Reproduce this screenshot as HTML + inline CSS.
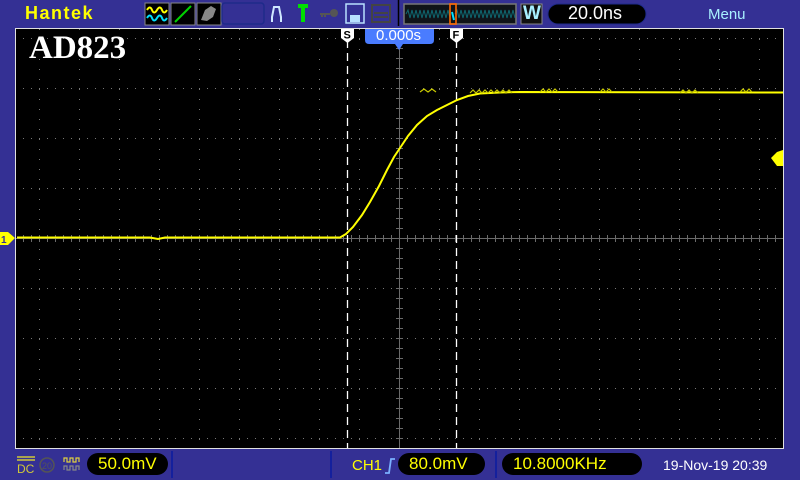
<!DOCTYPE html>
<html><head><meta charset="utf-8"><style>
html,body{margin:0;padding:0;width:800px;height:480px;overflow:hidden;background:#343094;font-family:"Liberation Sans",sans-serif;}
.t{position:absolute;white-space:nowrap}
</style></head><body>
<svg width="800" height="480" style="position:absolute;left:0;top:0" xmlns="http://www.w3.org/2000/svg">
<defs>
<pattern id="dc" x="39" y="29" width="40" height="10" patternUnits="userSpaceOnUse"><rect x="0" y="0" width="1" height="1" fill="#777"/></pattern>
<pattern id="dr" x="0" y="38" width="8" height="50" patternUnits="userSpaceOnUse"><rect x="7" y="0" width="1" height="1" fill="#777"/></pattern>
</defs>
<rect x="0" y="0" width="800" height="480" fill="#343094"/>
<rect x="15" y="28" width="769" height="421" fill="#e0e0e0"/>
<rect x="16" y="29" width="767" height="419" fill="#000"/>
<rect x="16" y="29" width="767" height="419" fill="url(#dc)"/>
<rect x="16" y="29" width="767" height="419" fill="url(#dr)"/>
<line x1="16" y1="238.5" x2="783" y2="238.5" stroke="#6a6a6a" stroke-width="1"/>
<line x1="399.5" y1="29" x2="399.5" y2="448" stroke="#6a6a6a" stroke-width="1"/>
<g stroke="#6a6a6a" stroke-width="1">
<path d="M23.5 235v7M31.5 235v7M39.5 235v7M47.5 235v7M55.5 235v7M63.5 235v7M71.5 235v7M79.5 235v7M87.5 235v7M95.5 235v7M103.5 235v7M111.5 235v7M119.5 235v7M127.5 235v7M135.5 235v7M143.5 235v7M151.5 235v7M159.5 235v7M167.5 235v7M175.5 235v7M183.5 235v7M191.5 235v7M199.5 235v7M207.5 235v7M215.5 235v7M223.5 235v7M231.5 235v7M239.5 235v7M247.5 235v7M255.5 235v7M263.5 235v7M271.5 235v7M279.5 235v7M287.5 235v7M295.5 235v7M303.5 235v7M311.5 235v7M319.5 235v7M327.5 235v7M335.5 235v7M343.5 235v7M351.5 235v7M359.5 235v7M367.5 235v7M375.5 235v7M383.5 235v7M391.5 235v7M407.5 235v7M415.5 235v7M423.5 235v7M431.5 235v7M439.5 235v7M447.5 235v7M455.5 235v7M463.5 235v7M471.5 235v7M479.5 235v7M487.5 235v7M495.5 235v7M503.5 235v7M511.5 235v7M519.5 235v7M527.5 235v7M535.5 235v7M543.5 235v7M551.5 235v7M559.5 235v7M567.5 235v7M575.5 235v7M583.5 235v7M591.5 235v7M599.5 235v7M607.5 235v7M615.5 235v7M623.5 235v7M631.5 235v7M639.5 235v7M647.5 235v7M655.5 235v7M663.5 235v7M671.5 235v7M679.5 235v7M687.5 235v7M695.5 235v7M703.5 235v7M711.5 235v7M719.5 235v7M727.5 235v7M735.5 235v7M743.5 235v7M751.5 235v7M759.5 235v7M767.5 235v7M775.5 235v7"/>
<path d="M396 38.5h7M396 48.5h7M396 58.5h7M396 68.5h7M396 78.5h7M396 98.5h7M396 108.5h7M396 118.5h7M396 128.5h7M396 148.5h7M396 158.5h7M396 168.5h7M396 178.5h7M396 198.5h7M396 208.5h7M396 218.5h7M396 228.5h7M396 248.5h7M396 258.5h7M396 268.5h7M396 278.5h7M396 298.5h7M396 308.5h7M396 318.5h7M396 328.5h7M396 348.5h7M396 358.5h7M396 368.5h7M396 378.5h7M396 398.5h7M396 408.5h7M396 418.5h7M396 428.5h7M396 88.5h7M396 138.5h7M396 188.5h7M396 288.5h7M396 338.5h7M396 388.5h7M396 438.5h7"/>
</g>
<line x1="347.5" y1="40" x2="347.5" y2="448" stroke="#fff" stroke-width="1.3" stroke-dasharray="8,5"/>
<line x1="456.5" y1="40" x2="456.5" y2="448" stroke="#fff" stroke-width="1.3" stroke-dasharray="8,5"/>
<path d="M17 237.5 L150 237.5 L158 239 L165 237.5 L340 237.5 L346 234 L353 227 L362 215 L370 202 L379 186 L387 170 L394 157 L400 148 L408 136 L417 125 L427 116 L437 110 L447 105 L457 100 L468 96 L480 93.5 L500 92.5 L520 92 L783 92.5" fill="none" stroke="#ffff00" stroke-width="2"/>
<path d="M420 92 l4 -3 l4 3 l4 -3 l4 3 M470 93 l3 -3 l3 3 l3 -3 l3 3 l3 -3 l3 3 l3 -3 l3 3 l3 -3 l3 3 l3 -3 l3 3 l3 -3 l3 3 M540 92 l3 -3 l3 3 l3 -3 l3 3 l3 -3 l3 3 M600 92 l3 -3 l3 3 l3 -3 l3 3 M680 93 l3 -3 l3 3 l3 -3 l3 3 l3 -3 l3 3 M740 92 l3 -3 l3 3 l3 -3 l3 3" fill="none" stroke="#c8c800" stroke-width="1.2"/>
<path d="M0 232 H8 L15 238 L8 245 H0 Z" fill="#ffff00"/>
<text x="1" y="243" font-family="Liberation Sans" font-weight="bold" font-size="10" fill="#343094">1</text>
<path d="M783 150 V166 H777 L771 158 L777 152 Z" fill="#ffff00"/>
<path d="M341 29 h13 v9 l-6.5 5 l-6.5 -5 z" fill="#fff"/>
<text x="343.5" y="38.5" font-family="Liberation Sans" font-weight="bold" font-size="11" fill="#000">S</text>
<path d="M450 29 h13 v9 l-6.5 5 l-6.5 -5 z" fill="#fff"/>
<text x="452.5" y="38.5" font-family="Liberation Sans" font-weight="bold" font-size="11" fill="#000">F</text>
<path d="M365 29 H434 V40 Q434 44 430 44 H403 L399 50 L395 44 H369 Q365 44 365 40 Z" fill="#4a7cff"/>
<rect x="145" y="3" width="24" height="22" fill="#000" stroke="#888" stroke-width="1"/>
<path d="M147 10 q3 -5 5 0 t5 0 t5 0 t5 0" stroke="#ffff00" stroke-width="2" fill="none"/>
<path d="M147 18 q3 -5 5 0 t5 0 t5 0 t5 0" stroke="#00e0ff" stroke-width="2" fill="none"/>
<rect x="171" y="3" width="24" height="22" fill="#000" stroke="#888"/>
<line x1="175" y1="22" x2="191" y2="6" stroke="#00d000" stroke-width="2"/>
<rect x="197" y="3" width="24" height="22" fill="#000" stroke="#888"/>
<path d="M201 20 l4 -10 l6 -4 l5 3 l-3 8 l-6 4 z" fill="#888"/>
<rect x="222" y="3" width="42" height="21" rx="3" fill="#343094" stroke="#1e2a8a" stroke-width="1.5"/>
<path d="M272 22 v-5 l2 -10 h5 l2 10 v5" stroke="#d0e8ff" stroke-width="2" fill="none"/>
<path d="M298 6 h10 M303 6 v16" stroke="#00e000" stroke-width="4"/>
<path d="M320 14 h10 M322 14 v3 M325 14 v3" stroke="#555" stroke-width="2"/>
<circle cx="334" cy="13" r="4" fill="#555"/>
<rect x="346" y="4" width="18" height="19" fill="none" stroke="#b8e0ff" stroke-width="1.5"/>
<rect x="350" y="15" width="10" height="7" fill="#b8e0ff"/>
<rect x="372" y="5" width="18" height="17" fill="none" stroke="#444" stroke-width="2"/>
<path d="M374 13 h14 M374 17 h14" stroke="#444" stroke-width="2"/>
<line x1="398.5" y1="0" x2="398.5" y2="26" stroke="#000" stroke-width="1.5"/>
<rect x="404" y="4" width="112" height="20" fill="#101418" stroke="#777" stroke-width="1.5"/>
<path d="M406 14 l2 -4 l2 8 l2 -8 l2 8 l2 -8 l2 8 l2 -8 l2 8 l2 -8 l2 8 l2 -8 l2 8 l2 -8 l2 8 l2 -8 l2 8 l2 -8 l2 8 l2 -8 l2 8 l2 -8 l2 8 M455 14 l2 -4 l2 8 l2 -8 l2 8 l2 -8 l2 8 l2 -8 l2 8 l2 -8 l2 8 l2 -8 l2 8 l2 -8 l2 8 l2 -8 l2 8 l2 -8 l2 8 l2 -8 l2 8 l2 -8 l2 8 l2 -8 l2 8 l2 -8 l2 8 l2 -8 l2 8 l2 -8 l2 8" stroke="#0f6870" stroke-width="1" fill="none"/>
<rect x="450" y="4" width="6" height="20" fill="none" stroke="#ff6a00" stroke-width="1.6"/>
<path d="M452 12 l2 8" stroke="#00e0ff" stroke-width="2"/>
<rect x="521" y="4" width="21" height="20" fill="#111" stroke="#888"/>
<rect x="548" y="4" width="98" height="20" rx="10" fill="#000" stroke="#1e2a8a"/>
<path d="M17 457 h18 M17 460 h18" stroke="#d0c838" stroke-width="1.5"/>
<circle cx="47" cy="465" r="7" fill="none" stroke="#555" stroke-width="1.5"/>
<text x="42" y="469" font-size="9" fill="#555" font-family="Liberation Sans">20</text>
<path d="M64 462 v-4 h3 v4 h3 v-4 h3 v4 h3 v-4 h3 v4" stroke="#e0d040" stroke-width="1.2" fill="none"/>
<path d="M64 470 v-4 h3 v4 h3 v-4 h3 v4 h3 v-4 h3 v4" stroke="#888" stroke-width="1.2" fill="none"/>
<rect x="87" y="453" width="81" height="22" rx="11" fill="#000"/>
<line x1="172" y1="451" x2="172" y2="478" stroke="#0a1aa0" stroke-width="1.5"/>
<line x1="331" y1="451" x2="331" y2="478" stroke="#0a1aa0" stroke-width="1.5"/>
<line x1="496" y1="451" x2="496" y2="478" stroke="#0a1aa0" stroke-width="1.5"/>
<path d="M385 473 h4 l2 -14 h4" stroke="#7ab0ff" stroke-width="1.8" fill="none"/>
<rect x="398" y="453" width="87" height="22" rx="11" fill="#000"/>
<rect x="502" y="453" width="140" height="22" rx="11" fill="#000"/>
</svg>
<div class="t" style="left:25px;top:3px;font-size:18px;font-weight:bold;color:#ffff00;letter-spacing:1.5px;">Hantek</div>
<div class="t" style="left:523px;top:3px;font-size:19px;font-weight:bold;color:#a8f0ff">W</div>
<div class="t" style="left:568px;top:3px;font-size:18px;color:#fff">20.0ns</div>
<div class="t" style="left:708px;top:6px;font-size:15px;color:#a8f0ff">Menu</div>
<div class="t" style="left:29px;top:30px;font-family:'Liberation Serif',serif;font-weight:bold;font-size:33px;color:#fff">AD823</div>
<div class="t" style="left:376px;top:27px;font-size:15px;color:#fff">0.000s</div>
<div class="t" style="left:17px;top:462px;font-size:12px;color:#d0c838">DC</div>
<div class="t" style="left:98px;top:454px;font-size:17px;color:#ffff00">50.0mV</div>
<div class="t" style="left:352px;top:457px;font-size:15px;color:#ffff00">CH1</div>
<div class="t" style="left:409px;top:454px;font-size:17px;color:#ffff00">80.0mV</div>
<div class="t" style="left:513px;top:454px;font-size:17px;color:#ffff00">10.8000KHz</div>
<div class="t" style="left:663px;top:457px;font-size:14px;color:#fff">19-Nov-19 20:39</div>
</body></html>
